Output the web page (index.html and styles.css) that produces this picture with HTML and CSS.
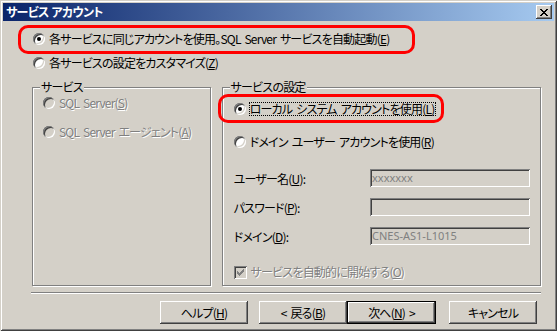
FILE: index.html
```html
<!DOCTYPE html>
<html lang="ja">
<head>
    <meta charset="UTF-8">
    <title>サービス アカウント</title>
    <link rel="stylesheet" href="styles.css">
</head>
<body>

<div class="window">
    <div class="titlebar">
        <span class="title">サービス アカウント</span>
        <span class="close-btn">
            <svg width="8" height="7" viewBox="0 0 8 7" shape-rendering="crispEdges">
                <path d="M0 0h2v1h-2zM1 1h2v1h-2zM2 2h4v1h-4zM3 3h2v1h-2zM2 4h4v1h-4zM1 5h2v1h-2zM0 6h2v1h-2zM6 0h2v1h-2zM5 1h2v1h-2zM5 5h2v1h-2zM6 6h2v1h-2z" fill="#000"/>
            </svg>
        </span>
    </div>

    <div class="content">
        <div class="option top-option first">
            <span class="radio checked"></span>
            <span class="text">各サービスに同じアカウントを使用。SQL Server サービスを自動起動(<u>E</u>)</span>
        </div>
        <div class="option top-option">
            <span class="radio"></span>
            <span class="text">各サービスの設定をカスタマイズ(<u>Z</u>)</span>
        </div>

        <div class="groups">
            <div class="group group-services">
                <span class="group-label">サービス</span>
                <div class="option disabled svc-first">
                    <span class="radio"></span>
                    <span class="text">SQL Server(<u>S</u>)</span>
                </div>
                <div class="option disabled svc-second">
                    <span class="radio"></span>
                    <span class="text">SQL Server エージェント(<u>A</u>)</span>
                </div>
            </div>

            <div class="group group-settings">
                <span class="group-label">サービスの設定</span>
                <div class="option acct-first">
                    <span class="radio checked"></span>
                    <span class="text focused">ローカル システム アカウントを使用(<u>L</u>)</span>
                </div>
                <div class="option acct-second">
                    <span class="radio"></span>
                    <span class="text">ドメイン ユーザー アカウントを使用(<u>R</u>)</span>
                </div>

                <div class="field first-field">
                    <span class="field-label">ユーザー名(<u>U</u>):</span>
                    <span class="edit">xxxxxxx</span>
                </div>
                <div class="field">
                    <span class="field-label">パスワード(<u>P</u>):</span>
                    <span class="edit"></span>
                </div>
                <div class="field">
                    <span class="field-label">ドメイン(<u>D</u>):</span>
                    <span class="edit">CNES-AS1-L1015</span>
                </div>

                <div class="option disabled auto-start">
                    <span class="checkbox">
                        <svg width="7" height="7" viewBox="0 0 7 7" shape-rendering="crispEdges">
                            <path d="M6 0h1v3h-1zM5 1h1v3h-1zM4 2h1v3h-1zM3 3h1v3h-1zM2 4h1v3h-1zM1 3h1v3h-1zM0 2h1v3h-1z" fill="#808080"/>
                        </svg>
                    </span>
                    <span class="text">サービスを自動的に開始する(<u>O</u>)</span>
                </div>
            </div>
        </div>

        <div class="separator"></div>

        <div class="buttons">
            <span class="btn btn-help">ヘルプ(<u>H</u>)</span>
            <span class="btn btn-back">&lt; 戻る(<u>B</u>)</span>
            <span class="btn btn-next default">次へ(<u>N</u>) &gt;</span>
            <span class="btn btn-cancel">キャンセル</span>
        </div>
    </div>

    <!-- red annotation marks -->
    <div class="mark mark-top"></div>
    <div class="mark mark-local"></div>
</div>

</body>
</html>
```

FILE: styles.css
```css
* {
    box-sizing: border-box;
}
body {
    margin: 0;
    background: #d4d0c8;
    font-family: "Noto Sans CJK JP", sans-serif;
    font-size: 12px;
    font-feature-settings: "palt";
    letter-spacing: -0.8px;
    word-spacing: 2px;
    color: #000;
}
u {
    text-decoration: underline;
    text-underline-offset: 1px;
}
.window {
    position: relative;
    width: 557px;
    height: 331px;
    padding: 3px;
    background: #d4d0c8;
    box-shadow: inset 1px 1px 0 #d4d0c8, inset -1px -1px 0 #404040,
                inset 2px 2px 0 #fff, inset -2px -2px 0 #808080;
}
.titlebar {
    height: 18px;
    display: flex;
    align-items: center;
    justify-content: space-between;
    padding: 0 2px 0 3px;
    background: linear-gradient(to right, #0a246a, #a6caf0);
}
.title {
    color: #fff;
    font-weight: bold;
    line-height: 14px;
    letter-spacing: -0.7px;
    word-spacing: 1px;
}
.close-btn {
    width: 16px;
    height: 14px;
    display: flex;
    align-items: center;
    justify-content: center;
    background: #d4d0c8;
    box-shadow: inset -1px -1px 0 #404040, inset 1px 1px 0 #fff,
                inset -2px -2px 0 #808080;
}
.content {
    padding: 10px 13px 0 28px;
}
.option {
    display: flex;
    align-items: center;
    height: 16px;
    line-height: 16px;
    white-space: nowrap;
}
.top-option {
    margin-left: 2px;
    margin-top: 8px;
}
.top-option.first {
    margin-top: 0;
}
.radio {
    position: relative;
    flex: none;
    width: 12px;
    height: 12px;
    margin-right: 4px;
    border-radius: 50%;
    background: #fff;
    box-shadow: inset 1px 1px 0 #808080, inset -1px -1px 0 #fff,
                inset 2px 2px 0 #404040, inset -2px -2px 0 #d4d0c8;
}
.radio.checked::after {
    content: "";
    position: absolute;
    left: 4px;
    top: 4px;
    width: 4px;
    height: 4px;
    border-radius: 50%;
    background: #000;
}
.disabled .radio {
    background: #d4d0c8;
}
.disabled .text {
    color: #808080;
    text-shadow: 1px 1px 0 #fff;
}
.text.focused {
    outline: 1px dotted #000;
    outline-offset: -1px;
    padding: 0 2px 0 1px;
    line-height: 14px;
}
.groups {
    display: flex;
    margin-top: 16px;
    margin-left: 1px;
}
.group {
    position: relative;
    height: 199px;
    border: 1px solid #808080;
    box-shadow: inset 1px 1px 0 #fff, 1px 1px 0 #fff;
}
.group-services {
    width: 179px;
    margin-right: 11px;
    padding: 7px 0 0 10px;
}
.group-settings {
    width: 320px;
    padding: 13px 10px 0 11px;
}
.group-label {
    position: absolute;
    top: -9px;
    left: 7px;
    padding: 0 1px;
    line-height: 16px;
    background: #d4d0c8;
}
.svc-second {
    margin-top: 13px;
}
.acct-first .radio {
    margin-right: 3px;
}
.acct-second {
    margin-top: 17px;
}
.field {
    display: flex;
    align-items: center;
    justify-content: space-between;
    height: 18px;
    margin-top: 11px;
}
.field.first-field {
    margin-top: 19px;
}
.edit {
    width: 160px;
    height: 18px;
    padding: 0 2px;
    line-height: 18px;
    color: #808080;
    font-family: "Noto Sans", sans-serif;
    font-size: 11px;
    letter-spacing: 0;
    background: #d4d0c8;
    box-shadow: inset 1px 1px 0 #808080, inset -1px -1px 0 #fff,
                inset 2px 2px 0 #404040, inset -2px -2px 0 #d4d0c8;
}
.auto-start {
    margin-top: 19px;
}
.checkbox {
    flex: none;
    width: 13px;
    height: 13px;
    margin-right: 4px;
    display: flex;
    align-items: center;
    justify-content: center;
    background: #d4d0c8;
    box-shadow: inset 1px 1px 0 #808080, inset -1px -1px 0 #fff,
                inset 2px 2px 0 #404040, inset -2px -2px 0 #d4d0c8;
}
.separator {
    height: 2px;
    margin-top: 6px;
    border-top: 1px solid #808080;
    border-bottom: 1px solid #fff;
}
.buttons {
    display: flex;
    justify-content: flex-end;
    margin-top: 7px;
    padding-right: 4px;
}
.btn {
    width: 88px;
    height: 23px;
    display: flex;
    align-items: center;
    justify-content: center;
    background: #d4d0c8;
    box-shadow: inset -1px -1px 0 #404040, inset 1px 1px 0 #fff,
                inset -2px -2px 0 #808080;
}
.btn.default {
    width: 89px;
    box-shadow: inset 0 0 0 1px #000, inset -2px -2px 0 #404040,
                inset 2px 2px 0 #fff, inset -3px -3px 0 #808080;
}
.btn-help {
    margin-right: 11px;
}
.btn-next {
    margin-right: 13px;
}
.mark {
    position: absolute;
    border: 3px solid #ff0000;
    border-radius: 10px;
}
.mark-top {
    left: 18px;
    top: 25px;
    width: 397px;
    height: 29px;
}
.mark-local {
    left: 218px;
    top: 94px;
    width: 226px;
    height: 29px;
}
```
